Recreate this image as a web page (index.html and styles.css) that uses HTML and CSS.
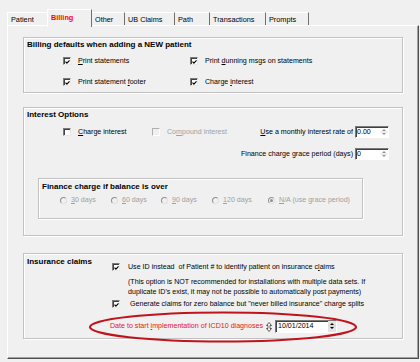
FILE: index.html
```html
<!DOCTYPE html>
<html lang="en">
<head>
    <meta charset="UTF-8">
    <title>Billing</title>
    <link rel="stylesheet" href="styles.css">
</head>
<body>
    <div class="dialog">
        <div class="tabs">
            <div class="tab tab-patient">Patient</div>
            <div class="tab tab-active">Billing</div>
            <div class="tab tab-other">Other</div>
            <div class="tab tab-ub">UB Claims</div>
            <div class="tab tab-path">Path</div>
            <div class="tab tab-trans">Transactions</div>
            <div class="tab tab-prompts">Prompts</div>
        </div>

        <div class="page">
            <div class="group group-defaults">
                <div class="group-title">Billing defaults when adding a NEW patient</div>
                <div class="check-grid">
                    <div class="check"><span class="box"><svg viewBox="0 0 6 6"><path d="M0.6 2.6 L2.3 4.3 L5.4 1.1"/></svg></span><span><u>P</u>rint statements</span></div>
                    <div class="check"><span class="box"><svg viewBox="0 0 6 6"><path d="M0.6 2.6 L2.3 4.3 L5.4 1.1"/></svg></span><span>Print <u>d</u>unning msgs on statements</span></div>
                    <div class="check"><span class="box"><svg viewBox="0 0 6 6"><path d="M0.6 2.6 L2.3 4.3 L5.4 1.1"/></svg></span><span>Print statement <u>f</u>ooter</span></div>
                    <div class="check"><span class="box"><svg viewBox="0 0 6 6"><path d="M0.6 2.6 L2.3 4.3 L5.4 1.1"/></svg></span><span>Charge <u>i</u>nterest</span></div>
                </div>
            </div>

            <div class="group group-interest">
                <div class="group-title">Interest Options</div>
                <div class="interest-row">
                    <div class="check check-charge"><span class="box"></span><span><u>C</u>harge interest</span></div>
                    <div class="check disabled"><span class="box"></span><span>Co<u>m</u>pound interest</span></div>
                    <div class="field">
                        <span><u>U</u>se a monthly interest rate of</span>
                        <div class="spin">
                            <span class="spin-val">0.00</span>
                            <span class="spin-btns"><svg viewBox="0 0 8 10"><path class="arr" d="M2 4 L4 2 L6 4 Z M2 6 L4 8 L6 6 Z"/><path class="sep" d="M0 5 H8"/></svg></span>
                        </div>
                    </div>
                </div>
                <div class="interest-row grace-row">
                    <div class="field">
                        <span>Finance charge grace period (days)</span>
                        <div class="spin">
                            <span class="spin-val">0</span>
                            <span class="spin-btns"><svg viewBox="0 0 8 10"><path class="arr" d="M2 4 L4 2 L6 4 Z M2 6 L4 8 L6 6 Z"/><path class="sep" d="M0 5 H8"/></svg></span>
                        </div>
                    </div>
                </div>

                <div class="subgroup">
                    <div class="group-title">Finance charge if balance is over</div>
                    <div class="radios">
                        <div class="radio r30"><span class="circle"></span><span><u>3</u>0 days</span></div>
                        <div class="radio r60"><span class="circle"></span><span><u>6</u>0 days</span></div>
                        <div class="radio r90"><span class="circle"></span><span><u>9</u>0 days</span></div>
                        <div class="radio r120"><span class="circle"></span><span><u>1</u>20 days</span></div>
                        <div class="radio"><span class="circle selected"></span><span><u>N</u>/A (use grace period)</span></div>
                    </div>
                </div>
            </div>

            <div class="group group-claims">
                <div class="group-title">Insurance claims</div>
                <div class="claims-body">
                    <div class="check claim-check"><span class="box"><svg viewBox="0 0 6 6"><path d="M0.6 2.6 L2.3 4.3 L5.4 1.1"/></svg></span><span>Use ID instead&nbsp; of Patient # to identify patient on insurance c<u>l</u>aims</span></div>
                    <div class="note">(This option is NOT recommended for installations with multiple data sets. If<br>duplicate ID's exist, it may not be possible to automatically post payments)</div>
                    <div class="check claim-check zero"><span class="box"><svg viewBox="0 0 6 6"><path d="M0.6 2.6 L2.3 4.3 L5.4 1.1"/></svg></span><span>Generate claims for zero balance but "never billed insurance" charge splits</span></div>
                    <div class="icd-row">
                        <span>Date to start <u>i</u>mplementation of ICD10 diagnoses</span>
                        <svg class="updown" viewBox="0 0 6 10"><path d="M3 0.5 L5.5 3.5 H4 V6.5 H5.5 L3 9.5 L0.5 6.5 H2 V3.5 H0.5 Z"/></svg>
                        <div class="spin date">
                            <span class="spin-val">10/01/2014</span>
                            <span class="spin-btns face"><svg viewBox="0 0 8 10"><path class="arr dark" d="M2 4 L4 2 L6 4 Z M2 6 L4 8 L6 6 Z"/><path class="sep" d="M0 5 H8"/></svg></span>
                        </div>
                    </div>
                </div>
            </div>

            <svg class="ellipse" viewBox="0 0 270 32"><ellipse cx="135" cy="16" rx="133" ry="14.5"/></svg>
        </div>
    </div>
</body>
</html>
```

FILE: styles.css
```css
*{
    box-sizing: border-box;
}
body{
    margin: 0;
    padding: 0 0 0 7px;
    background: #f0f0f0;
    font-family: "Liberation Sans", Arial, sans-serif;
    font-size: 7.1px;
    line-height: 9px;
    color: #000;
}
u{
    text-decoration-thickness: 1px;
}
.dialog{
    width: 412px;
}

/* tab strip */
.tabs{
    display: flex;
    margin-top: 12px;
    height: 14px;
}
.tab{
    height: 14px;
    padding: 2px 0 0 3px;
    border-top: 1px solid #fff;
    border-right: 1px solid #707070;
    font-size: 7.3px;
}
.tab-patient{ width: 40px; border-left: 1px solid #fff; border-right: none; }
.tab-active{
    position: relative;
    z-index: 1;
    width: 45px;
    height: 18px;
    margin-top: -3px;
    padding-top: 3px;
    border-left: 1px solid #fff;
    background: #f0f0f0;
    color: #f00;
    font-weight: bold;
}
.tab-other{ width: 33px; }
.tab-ub{ width: 50px; }
.tab-path{ width: 35px; }
.tab-trans{ width: 56px; }
.tab-prompts{ width: 43px; }

.page{
    position: relative;
    height: 334px;
    margin-top: -1px;
    border: 1px solid;
    border-color: #fff #505050 #505050 #fff;
    box-shadow: inset -1px -1px 0 #a0a0a0;
    padding: 11px 0 0 15px;
}

/* group boxes */
.group, .subgroup{
    border: 1px solid #c2c2c2;
    box-shadow: inset 1px 1px 0 #fff, 1px 1px 0 #fff;
}
.group{
    width: 380px;
}
.group-title{
    font-weight: bold;
    font-size: 8px;
    padding: 2px 0 0 3px;
}
.group-defaults{ height: 56px; }
.group-interest{ height: 129px; margin-top: 14px; }
.group-claims{
    height: 86px;
    margin-top: 17px;
    display: grid;
    grid-template-columns: 86px 1fr;
}
.group-claims .group-title{ padding-top: 3px; }

/* checkboxes */
.check{
    display: flex;
    align-items: center;
    gap: 7px;
    height: 10px;
}
.box{
    width: 8px;
    height: 8px;
    flex: none;
    background: #fff;
    border: 1px solid;
    border-color: #7a7a7a #e8e8e8 #e8e8e8 #7a7a7a;
    box-shadow: inset 1px 1px 0 #404040;
    display: flex;
    align-items: center;
    justify-content: center;
}
.box svg{
    width: 6px;
    height: 6px;
    margin: 1px 0 0 1px;
}
.box path{
    fill: none;
    stroke: #000;
    stroke-width: 1.4;
}
.check.disabled{
    color: #a0a0a0;
}
.check.disabled .box{
    background: #f0f0f0;
    border-color: #b0b0b0 #fff #fff #b0b0b0;
    box-shadow: none;
}

.check-grid{
    display: grid;
    grid-template-columns: 127px auto;
    row-gap: 11px;
    margin: 7px 0 0 39px;
}

/* interest options */
.interest-row{
    display: flex;
    align-items: center;
    height: 12px;
    margin-top: 7px;
    padding: 0 13px 0 39px;
}
.check-charge{ width: 89px; }
.grace-row{
    justify-content: flex-end;
    margin-top: 10px;
}
.field{
    margin-left: auto;
    display: flex;
    align-items: center;
    gap: 2px;
}
.spin{
    width: 34px;
    height: 12px;
    display: flex;
    background: #fff;
    border: 1px solid;
    border-color: #7a7a7a #fff #fff #7a7a7a;
    box-shadow: inset 1px 1px 0 #404040;
    line-height: 10px;
}
.spin-val{
    flex: 1;
    padding-left: 1px;
    color: #000;
}
.spin-btns{
    width: 8px;
    display: flex;
}
.spin-btns svg{
    width: 8px;
    height: 10px;
}
.spin-btns .arr{ fill: #909090; }
.spin-btns .arr.dark{ fill: #000; }
.spin-btns .sep{ stroke: #c8c8c8; stroke-width: 0.6; }
.spin-btns.face{ background: #e4e4e4; }

.subgroup{
    width: 325px;
    height: 41px;
    margin: 18px 0 0 14px;
}
.subgroup .group-title{ padding-top: 3px; }
.radios{
    display: flex;
    margin: 5px 0 0 21px;
}
.radio{
    display: flex;
    align-items: center;
    gap: 4px;
    color: #a0a0a0;
}
.r30, .r90{ width: 51px; }
.r60{ width: 50px; }
.r120{ width: 56px; }
.circle{
    width: 7px;
    height: 7px;
    border-radius: 50%;
    border: 1px solid;
    border-color: #909090 #e0e0e0 #e0e0e0 #909090;
    display: flex;
    align-items: center;
    justify-content: center;
}
.circle.selected::after{
    content: "";
    width: 3px;
    height: 3px;
    border-radius: 50%;
    background: #909090;
}

/* insurance claims */
.claims-body{
    padding-top: 8px;
}
.claim-check{
    margin-left: 2px;
    gap: 8px;
}
.claim-check.zero{
    gap: 10px;
    margin-top: 2px;
}
.note{
    margin: 5px 0 0 18px;
    line-height: 10px;
}
.icd-row{
    display: flex;
    align-items: center;
    height: 13px;
    margin-top: 11px;
    color: #e8141c;
}
.updown{
    width: 6px;
    height: 10px;
    margin: 0 3px 0 3px;
}
.updown path{
    fill: #fff;
    stroke: #333;
    stroke-width: 0.8;
}
.spin.date{
    width: 62px;
    height: 13px;
}
.spin.date .spin-val{
    padding-left: 2px;
    line-height: 11px;
}

.ellipse{
    position: absolute;
    left: 80px;
    top: 285px;
    width: 270px;
    height: 32px;
    overflow: visible;
}
.ellipse ellipse{
    fill: none;
    stroke: #c0141c;
    stroke-width: 2.2;
}
```
